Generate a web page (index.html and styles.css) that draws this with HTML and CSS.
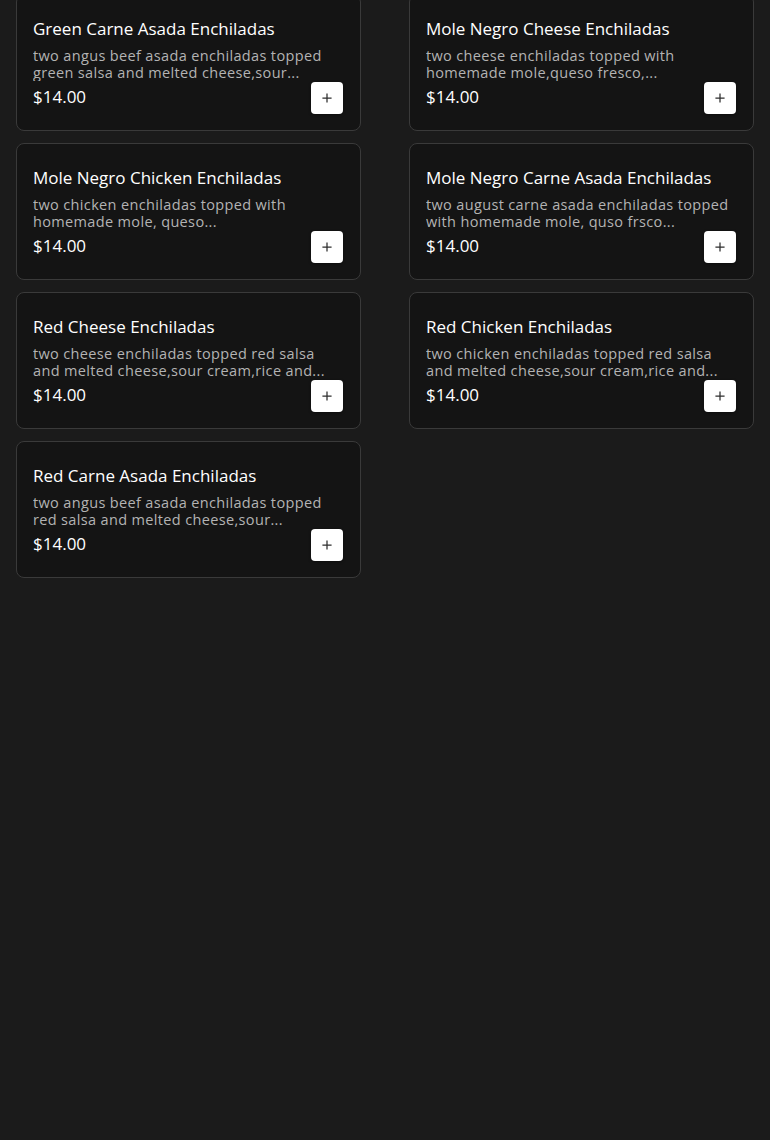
FILE: index.html
```html
<!DOCTYPE html>
<html>
<head>
    <meta charset="UTF-8">
    <meta name="viewport" content="width=device-width, initial-scale=1.0">
    <link rel="stylesheet" href="styles.css">
</head>
<body>
    <div class="menu-grid">
        <div class="item-card">
            <h3 class="item-title">Green Carne Asada Enchiladas</h3>
            <p class="item-desc">two angus beef asada enchiladas topped green salsa and melted cheese,sour...</p>
            <div class="item-footer">
                <span class="item-price">$14.00</span>
                <button class="add-button"><svg viewBox="0 0 12 12" width="10" height="10"><path d="M6 0.5v11M0.5 6h11" stroke="#2e2e2e" stroke-width="1.5" fill="none"/></svg></button>
            </div>
        </div>
        <div class="item-card">
            <h3 class="item-title">Mole Negro Cheese Enchiladas</h3>
            <p class="item-desc">two cheese enchiladas topped with homemade mole,queso fresco,...</p>
            <div class="item-footer">
                <span class="item-price">$14.00</span>
                <button class="add-button"><svg viewBox="0 0 12 12" width="10" height="10"><path d="M6 0.5v11M0.5 6h11" stroke="#2e2e2e" stroke-width="1.5" fill="none"/></svg></button>
            </div>
        </div>
        <div class="item-card">
            <h3 class="item-title">Mole Negro Chicken Enchiladas</h3>
            <p class="item-desc">two chicken enchiladas topped with homemade mole, queso...</p>
            <div class="item-footer">
                <span class="item-price">$14.00</span>
                <button class="add-button"><svg viewBox="0 0 12 12" width="10" height="10"><path d="M6 0.5v11M0.5 6h11" stroke="#2e2e2e" stroke-width="1.5" fill="none"/></svg></button>
            </div>
        </div>
        <div class="item-card">
            <h3 class="item-title">Mole Negro Carne Asada Enchiladas</h3>
            <p class="item-desc">two august carne asada enchiladas topped with homemade mole, quso frsco...</p>
            <div class="item-footer">
                <span class="item-price">$14.00</span>
                <button class="add-button"><svg viewBox="0 0 12 12" width="10" height="10"><path d="M6 0.5v11M0.5 6h11" stroke="#2e2e2e" stroke-width="1.5" fill="none"/></svg></button>
            </div>
        </div>
        <div class="item-card">
            <h3 class="item-title">Red Cheese Enchiladas</h3>
            <p class="item-desc">two cheese enchiladas topped red salsa and melted cheese,sour cream,rice and...</p>
            <div class="item-footer">
                <span class="item-price">$14.00</span>
                <button class="add-button"><svg viewBox="0 0 12 12" width="10" height="10"><path d="M6 0.5v11M0.5 6h11" stroke="#2e2e2e" stroke-width="1.5" fill="none"/></svg></button>
            </div>
        </div>
        <div class="item-card">
            <h3 class="item-title">Red Chicken Enchiladas</h3>
            <p class="item-desc">two chicken enchiladas topped red salsa and melted cheese,sour cream,rice and...</p>
            <div class="item-footer">
                <span class="item-price">$14.00</span>
                <button class="add-button"><svg viewBox="0 0 12 12" width="10" height="10"><path d="M6 0.5v11M0.5 6h11" stroke="#2e2e2e" stroke-width="1.5" fill="none"/></svg></button>
            </div>
        </div>
        <div class="item-card">
            <h3 class="item-title">Red Carne Asada Enchiladas</h3>
            <p class="item-desc">two angus beef asada enchiladas topped red salsa and melted cheese,sour...</p>
            <div class="item-footer">
                <span class="item-price">$14.00</span>
                <button class="add-button"><svg viewBox="0 0 12 12" width="10" height="10"><path d="M6 0.5v11M0.5 6h11" stroke="#2e2e2e" stroke-width="1.5" fill="none"/></svg></button>
            </div>
        </div>
    </div>
</body>
</html>
```

FILE: styles.css
```css
* {
    margin: 0;
    padding: 0;
    box-sizing: border-box;
    font-family: 'Open Sans', 'Liberation Sans', sans-serif;
}

body {
    min-height: 100vh;
    background: #1b1b1b;
    color: #fff;
}

.menu-grid {
    display: grid;
    grid-template-columns: 345px 345px;
    column-gap: 48px;
    row-gap: 12px;
    padding: 0 16px;
    margin-top: -6px;
}

.item-card {
    background: #141414;
    border: 1px solid #3a3a3a;
    border-radius: 8px;
    padding: 22px 17px 16px 16px;
    height: 137px;
    display: flex;
    flex-direction: column;
}

.item-title {
    font-size: 17px;
    font-weight: 500;
    line-height: 24px;
    color: #fff;
    margin-bottom: 6px;
}

.item-desc {
    font-size: 14.5px;
    line-height: 17px;
    letter-spacing: 0.35px;
    color: #b3b3b3;
    display: -webkit-box;
    -webkit-line-clamp: 2;
    -webkit-box-orient: vertical;
    overflow: hidden;
}

.item-footer {
    display: flex;
    justify-content: space-between;
    align-items: center;
    margin-top: 1px;
}

.item-price {
    font-size: 17px;
    color: #fff;
    margin-top: -3px;
}

.add-button {
    width: 32px;
    height: 32px;
    background: #fff;
    border: none;
    border-radius: 4px;
    display: flex;
    align-items: center;
    justify-content: center;
    cursor: pointer;
    box-shadow: 0 1px 3px rgba(0, 0, 0, 0.4);
}
```
